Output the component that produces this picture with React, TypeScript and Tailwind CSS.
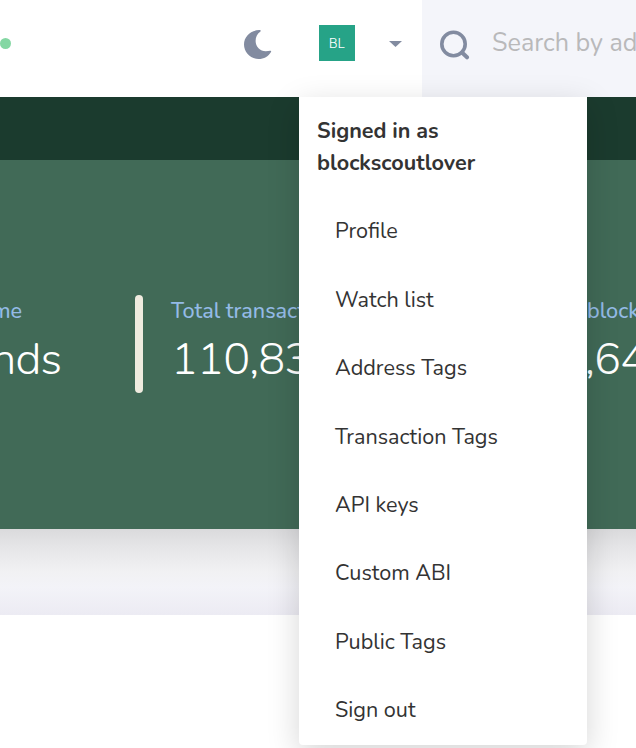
const items = [
  'Profile',
  'Watch list',
  'Address Tags',
  'Transaction Tags',
  'API keys',
  'Custom ABI',
  'Public Tags',
  'Sign out',
];

function Header() {
  return (
    <header className="flex h-[97px] items-stretch bg-white">
      <div className="flex w-[422px] items-center">
        <span className="mb-[10px] size-[11px] rounded-full bg-[#84d7a3]" />
        <svg className="mb-2 ml-[233px] h-[29px] w-7 shrink-0" viewBox="0 0 28 29" fill="#828ba0">
          <path d="M15.1 0.1 C16.7 0 17.3 0.8 16.2 1.7 C13.1 4 11.6 7 11.6 11 C11.6 16.7 16.1 21.2 21.8 21.2 C23.4 21.2 24.8 20.9 26.1 20.7 C27.1 20.5 27.5 21.1 27 21.9 C24.4 26.2 19.9 29 14.6 29 C6.6 29 0 22.5 0 14.5 C0 6.6 6.6 0.4 15.1 0.1Z" />
        </svg>
        <div className="mb-[11px] ml-[47px] flex size-9 items-center justify-center bg-[#26a387] font-['Inter','Liberation_Sans',sans-serif] text-[13.6px] font-light text-white">
          BL
        </div>
        <svg className="mb-[9px] ml-[34px] h-[6px] w-[13px]" viewBox="0 0 13 6" fill="#828ba0">
          <path d="M0 0H13L6.5 6Z" />
        </svg>
      </div>
      <div className="flex flex-1 items-center overflow-hidden bg-[#f4f5fa]">
        <svg className="mb-2 ml-[18px] h-[30px] w-[30px] shrink-0" viewBox="0 0 30 30" fill="none" stroke="#828ba0">
          <circle cx="13.5" cy="14" r="11.7" strokeWidth="3.6" />
          <path d="M22 22.5L27 27.3" strokeWidth="4" strokeLinecap="round" />
        </svg>
        <span className="mb-[10px] ml-[22px] whitespace-nowrap text-[25.2px] text-[#b9b9ba]">Search by ad</span>
      </div>
    </header>
  );
}

function Stats() {
  return (
    <section className="h-[432px] bg-[#416a57]">
      <div className="h-[63px] bg-[#1b3b2e]" />
      <div className="mt-[135px] flex h-[98px] whitespace-nowrap">
        <div className="flex w-[135px] flex-col">
          <span className="flex h-8 w-[22px] items-center justify-end text-[21.6px] font-medium text-[#94bbe6]">me</span>
          <span className="flex h-[66px] w-[61px] items-center justify-end text-[45px] font-light tracking-[-0.9px] text-white">nds</span>
        </div>
        <div className="w-2 rounded-[4px] bg-[#efebdf]" />
        <div className="ml-7 flex w-[128px] flex-col">
          <span className="flex h-8 items-center text-[21.6px] font-medium text-[#94bbe6]">Total transact</span>
          <span className="flex h-[66px] items-center text-[45px] font-light tracking-[-0.9px] text-white">110,83</span>
        </div>
        <div className="ml-[288px] flex w-[49px] flex-col">
          <span className="flex h-8 items-center text-[21.6px] font-medium text-[#94bbe6]">block</span>
          <span className="-ml-0.5 flex h-[66px] items-center text-[45px] font-light tracking-[-0.9px] text-white">,64</span>
        </div>
      </div>
    </section>
  );
}

function AccountMenu() {
  return (
    <div className="absolute left-[299px] top-[97px] h-[648px] w-[288px] rounded-b-[4px] bg-white text-[21.6px] text-[#333] shadow-[0_9px_32px_rgba(0,0,0,0.17)]">
      <div className="p-[18px] font-bold leading-8">
        <div className="whitespace-nowrap">Signed in as</div>
        <div className="whitespace-nowrap">blockscoutlover</div>
      </div>
      <ul>
        {items.map((item) => (
          <li key={item} className="flex h-[68.4px] items-center pl-9 pt-[0.8px]">
            {item}
          </li>
        ))}
      </ul>
    </div>
  );
}

export default function App() {
  return (
    <div className="relative h-[748px] w-[636px] overflow-hidden bg-white font-['Nunito','Lato',sans-serif]">
      <Header />
      <Stats />
      <div className="h-[86px] bg-[linear-gradient(#dadadc,#e5e5e7_20%,#f1f1f3_49%,#f3f3f8_68%,#ecebf3)]" />
      <AccountMenu />
    </div>
  );
}
